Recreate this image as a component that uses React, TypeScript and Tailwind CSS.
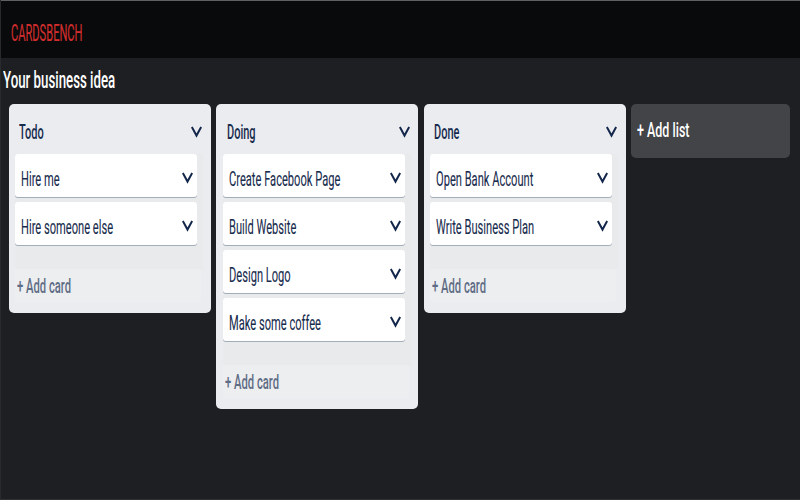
import React from 'react';

type List = { title: string; cards: string[] };

const lists: List[] = [
  { title: 'Todo', cards: ['Hire me', 'Hire someone else'] },
  {
    title: 'Doing',
    cards: ['Create Facebook Page', 'Build Website', 'Design Logo', 'Make some coffee'],
  },
  { title: 'Done', cards: ['Open Bank Account', 'Write Business Plan'] },
];

function Narrow({ children, className }: { children: React.ReactNode; className: string }) {
  return (
    <span className={`block w-max origin-left whitespace-nowrap ${className}`}>{children}</span>
  );
}

function Chevron() {
  return (
    <svg width="11" height="12" viewBox="0 0 11 12" className="shrink-0" fill="none">
      <path d="M0.8 1 L5.5 9.6 L10.2 1" stroke="#12254a" strokeWidth="2" />
    </svg>
  );
}

function Card({ text }: { text: string }) {
  return (
    <div className="flex h-[43px] w-[182px] items-center justify-between rounded-[3px] bg-white pr-1 pl-1.5 shadow-[0_1px_0_#a5adba]">
      <div className="w-[150px] pt-[7px]">
        <Narrow className="scale-x-[0.556] text-[20px] leading-6 text-[#172b4d] [-webkit-text-stroke:0.1px_#172b4d]">
          {text}
        </Narrow>
      </div>
      <div className="pt-[5px]">
        <Chevron />
      </div>
    </div>
  );
}

function Column({ list }: { list: List }) {
  return (
    <section className="w-[202px] shrink-0 rounded-[5px] bg-[#ebecf0] pb-[11px] pl-[6.5px]">
      <header className="flex h-[50px] items-center justify-between pt-[6px] pr-[8.5px] pl-1">
        <div className="w-[150px]">
          <Narrow className="scale-x-[0.55] text-[20px] leading-6 font-medium text-[#172b4d]">
            {list.title}
          </Narrow>
        </div>
        <Chevron />
      </header>
      <div className="flex w-[188px] flex-col gap-[5px] bg-[#e9eaec] pb-6">
        {list.cards.map((text) => (
          <Card key={text} text={text} />
        ))}
      </div>
      <div className="flex h-[33px] w-[186px] items-center rounded-[3px] bg-[#edeef0] pt-px pl-0.5">
        <Narrow className="scale-x-[0.562] text-[20px] leading-6 font-medium text-[#5e6c84]">
          + Add card
        </Narrow>
      </div>
    </section>
  );
}

export default function App() {
  return (
    <div className="flex h-[500px] w-[800px] flex-col overflow-hidden border-b border-l border-b-[#303136] border-l-[#292a2e] bg-[#1e1f23] font-['Roboto',sans-serif]">
      <header className="flex h-[58px] items-center border-t border-[#606164] bg-[#090a0b] pt-2 pl-[10px]">
        <Narrow className="scale-x-[0.483] text-[23px] leading-7 text-[#d12e2e] [-webkit-text-stroke:0.2px_#d12e2e]">
          CARDSBENCH
        </Narrow>
      </header>
      <div className="flex h-[45.5px] shrink-0 items-center pt-px pl-0.5">
        <Narrow className="scale-x-[0.577] text-[23px] leading-7 font-medium text-white">
          Your business idea
        </Narrow>
      </div>
      <main className="flex items-start gap-[5.5px] pl-[7.5px]">
        {lists.map((list) => (
          <Column key={list.title} list={list} />
        ))}
        <div className="flex h-[54px] w-[159px] shrink-0 items-center rounded-[5px] bg-[#434447] pb-0.5 pl-[6px]">
          <Narrow className="scale-x-[0.595] text-[21px] leading-7 font-medium text-white">
            + Add list
          </Narrow>
        </div>
      </main>
    </div>
  );
}
